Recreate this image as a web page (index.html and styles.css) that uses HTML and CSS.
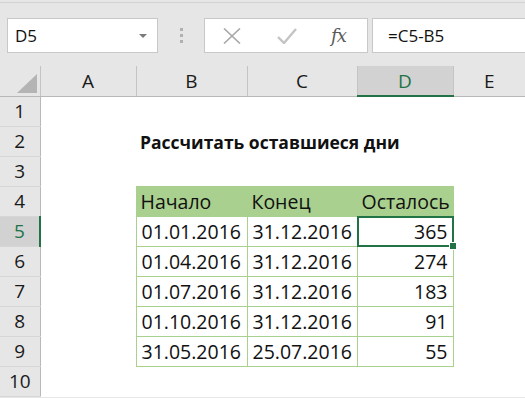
FILE: index.html
```html
<!DOCTYPE html>
<html lang="ru">
<head>
    <meta charset="UTF-8">
    <title>Рассчитать оставшиеся дни</title>
    <link rel="stylesheet" href="styles.css">
</head>
<body>
    <div class="formula-bar">
        <div class="name-box">
            <span>D5</span>
            <span class="caret"></span>
        </div>
        <div class="grip"><i></i><i></i><i></i></div>
        <div class="fx-buttons">
            <svg class="btn-cancel" width="18" height="16" viewBox="0 0 18 16">
                <path d="M1 0.5 L17 15.5 M17 0.5 L1 15.5" stroke="#a8a8a8" stroke-width="1.6" fill="none"/>
            </svg>
            <svg class="btn-enter" width="20" height="16" viewBox="0 0 20 16">
                <path d="M1 9 L7 15 L19 1" stroke="#c4c4c4" stroke-width="2.4" fill="none"/>
            </svg>
            <span class="fx">fx</span>
        </div>
        <div class="formula-input">=C5-B5</div>
    </div>

    <table class="sheet">
        <colgroup>
            <col class="col-rowhead">
            <col class="col-a">
            <col class="col-b">
            <col class="col-c">
            <col class="col-d">
            <col>
        </colgroup>
        <thead>
            <tr>
                <th class="corner"><span class="corner-tri"></span></th>
                <th>A</th>
                <th>B</th>
                <th>C</th>
                <th class="active">D</th>
                <th>E</th>
            </tr>
        </thead>
        <tbody>
            <tr><th>1</th><td></td><td></td><td></td><td></td><td></td></tr>
            <tr><th>2</th><td></td><td class="title">Рассчитать оставшиеся дни</td><td></td><td></td><td></td></tr>
            <tr><th>3</th><td></td><td></td><td></td><td></td><td></td></tr>
            <tr class="tbl-head"><th>4</th><td></td><td class="t">Начало</td><td class="t">Конец</td><td class="t">Осталось</td><td></td></tr>
            <tr><th class="active">5</th><td></td><td class="t date">01.01.2016</td><td class="t date">31.12.2016</td><td class="t num selected">365<span class="handle"></span></td><td></td></tr>
            <tr><th>6</th><td></td><td class="t date">01.04.2016</td><td class="t date">31.12.2016</td><td class="t num">274</td><td></td></tr>
            <tr><th>7</th><td></td><td class="t date">01.07.2016</td><td class="t date">31.12.2016</td><td class="t num">183</td><td></td></tr>
            <tr><th>8</th><td></td><td class="t date">01.10.2016</td><td class="t date">31.12.2016</td><td class="t num">91</td><td></td></tr>
            <tr><th>9</th><td></td><td class="t date">31.05.2016</td><td class="t date">25.07.2016</td><td class="t num">55</td><td></td></tr>
            <tr><th>10</th><td></td><td></td><td></td><td></td><td></td></tr>
        </tbody>
    </table>
</body>
</html>
```

FILE: styles.css
```css
body {
    margin: 0;
    background: #e6e6e6;
    font-family: "Open Sans", "Liberation Sans", sans-serif;
    color: #111;
    overflow: hidden;
}

/* formula bar */
.formula-bar {
    margin-top: 2px;
    border-top: 1px solid #d2d2d2;
    height: 64px;
    display: flex;
    align-items: flex-start;
    padding: 15px 0 0 7px;
    box-sizing: border-box;
}
.name-box {
    width: 151px;
    height: 35px;
    box-sizing: border-box;
    background: white;
    border: 1px solid #c8c8c8;
    display: flex;
    align-items: center;
    justify-content: space-between;
    padding: 0 10px 0 7px;
    font-size: 17px;
}
.caret {
    width: 0;
    height: 0;
    border-left: 4px solid transparent;
    border-right: 4px solid transparent;
    border-top: 4px solid #7a7a7a;
}
.grip {
    width: 46px;
    height: 35px;
    display: flex;
    flex-direction: column;
    align-items: center;
    justify-content: center;
    gap: 3px;
}
.grip i {
    width: 3px;
    height: 3px;
    background: #b0b0b0;
}
.fx-buttons {
    width: 164px;
    height: 35px;
    box-sizing: border-box;
    background: white;
    border: 1px solid #c8c8c8;
    display: flex;
    align-items: center;
    padding-left: 18px;
}
.btn-enter {
    margin-left: 36px;
}
.fx {
    margin-left: 34px;
    font-family: "DejaVu Serif", "Liberation Serif", serif;
    font-style: italic;
    font-size: 18px;
    letter-spacing: -1px;
    color: #5a5a5a;
}
.formula-input {
    flex: 1;
    margin-left: 4px;
    height: 35px;
    box-sizing: border-box;
    background: white;
    border: 1px solid #c8c8c8;
    border-right: none;
    display: flex;
    align-items: center;
    padding-left: 15px;
    font-size: 17px;
}

/* worksheet */
.sheet {
    width: 525px;
    table-layout: fixed;
    border-collapse: collapse;
    background: white;
}
.col-rowhead { width: 40px; }
.col-a { width: 96px; }
.col-b { width: 111px; }
.col-c { width: 110px; }
.col-d { width: 96px; }

.sheet tr {
    height: 30px;
}
.sheet th {
    background: #e6e6e6;
    font-weight: normal;
    font-size: 19px;
    line-height: 22px;
    padding: 0;
    color: #1a1a1a;
}
.sheet thead th {
    border-left: 1px solid #c4c4c4;
    border-bottom: 1px solid #b8b8b8;
    text-align: center;
}
.sheet thead th.corner {
    border-left: none;
    position: relative;
}
.corner-tri {
    position: absolute;
    right: 3px;
    bottom: 3px;
    width: 0;
    height: 0;
    border-left: 20px solid transparent;
    border-bottom: 19px solid #b4b4b4;
}
.sheet thead th.active {
    background: #d2d2d2;
    color: #217346;
    border-bottom: 2px solid #217346;
}
.sheet tbody th {
    border-right: 1px solid #b8b8b8;
    border-bottom: 1px solid #d6d6d6;
    text-align: center;
}
.sheet tbody th.active {
    background: #d2d2d2;
    color: #217346;
    border-right: 2px solid #217346;
}

.sheet td {
    padding: 0 5px 3px 4px;
    vertical-align: bottom;
    font-size: 19.5px;
    white-space: nowrap;
    line-height: 22px;
}
.sheet td.title {
    font-weight: bold;
    font-size: 17.5px;
    padding-bottom: 3px;
}
.sheet td.t {
    border: 1px solid #a9d08e;
}
.sheet td.date {
    padding-left: 5px;
}
.tbl-head td.t {
    background: #a9d08e;
}
.sheet td.num {
    text-align: right;
}
.sheet td.selected {
    position: relative;
}
.sheet td.selected::after {
    content: "";
    position: absolute;
    left: -1px;
    top: -1px;
    right: -1px;
    bottom: -1px;
    border: 2px solid #217346;
}
.handle {
    position: absolute;
    right: -4px;
    bottom: -4px;
    width: 6px;
    height: 6px;
    background: #217346;
    border: 1px solid white;
    z-index: 1;
}
```
